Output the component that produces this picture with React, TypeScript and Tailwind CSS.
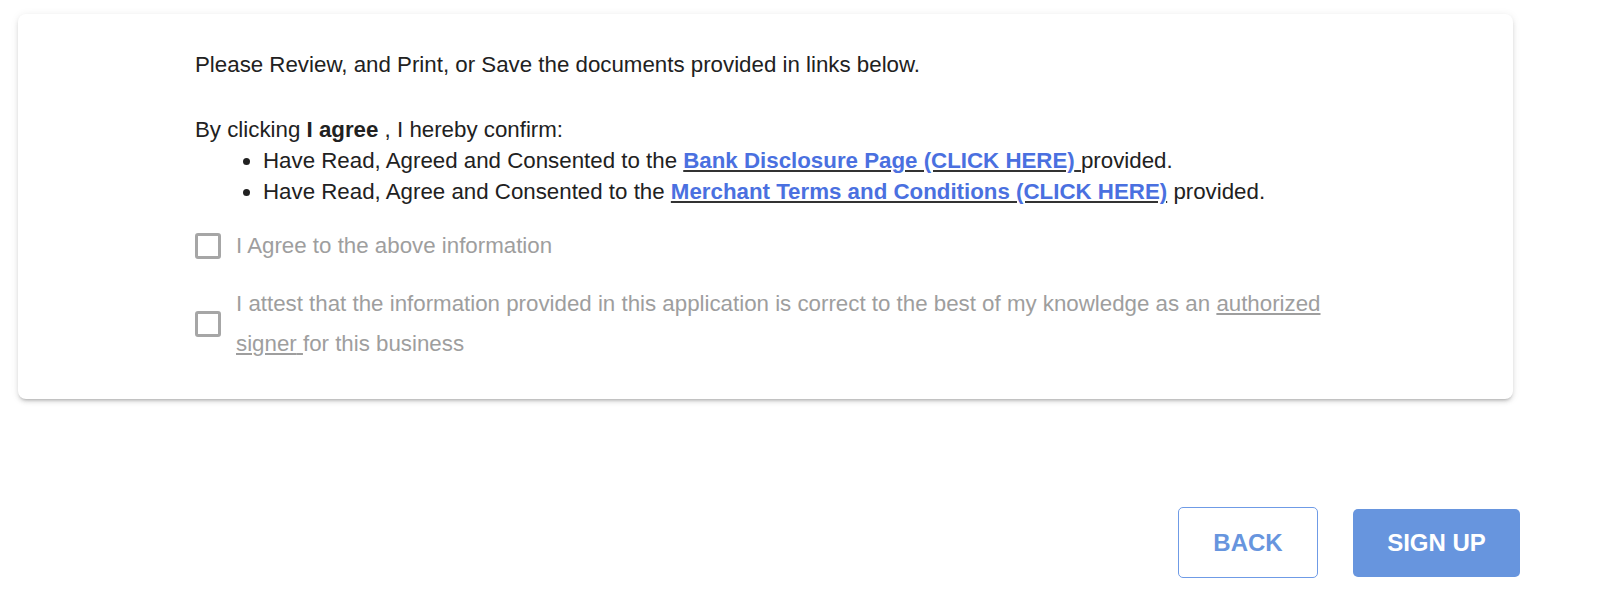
const font = { fontFamily: '"Liberation Sans", Arial, sans-serif' };

function Box() {
  return (
    <span className="block w-[26px] h-[26px] shrink-0 rounded-[3px] border-[3px] border-[#a6a6a6] bg-white" />
  );
}

export default function App() {
  return (
    <div className="min-h-[599px] bg-white pt-[14px] pl-[18px]" style={font}>
      <div className="w-[1495px] rounded-lg bg-white px-[177px] pt-[35px] pb-[35px] shadow-[0_3px_3px_-2px_rgba(0,0,0,0.2),0_3px_4px_0_rgba(0,0,0,0.1),0_1px_8px_0_rgba(0,0,0,0.08)]">
        <p className="text-[22.3px] leading-[31px] text-[#212121]">
          Please Review, and Print, or Save the documents provided in links below.
        </p>
        <p className="mt-[34px] text-[22.3px] leading-[31px] text-[#212121]">
          By clicking <b className="font-bold">I agree</b> , I hereby confirm:
        </p>
        <ul className="list-disc pl-[68px] text-[22.3px] leading-[31px] text-[#212121]">
          <li>
            Have Read, Agreed and Consented to the{" "}
            <a href="#" className="font-bold text-[#4a70e0] underline decoration-[#333] underline-offset-2">
              Bank Disclosure Page (CLICK HERE){" "}
            </a>
            provided.
          </li>
          <li>
            Have Read, Agree and Consented to the{" "}
            <a href="#" className="font-bold text-[#4a70e0] underline decoration-[#333] underline-offset-2">
              Merchant Terms and Conditions (CLICK HERE)
            </a>{" "}
            provided.
          </li>
        </ul>

        <label className="mt-[19px] flex h-[40px] items-center gap-[15px]">
          <Box />
          <span className="text-[22.3px] leading-[40px] text-[#9e9e9e]">I Agree to the above information</span>
        </label>

        <label className="mt-[18px] flex items-center gap-[15px]">
          <Box />
          <span className="text-[22.3px] leading-[40px] text-[#9e9e9e]">
            I attest that the information provided in this application is correct to the best of my knowledge as an{" "}
            <a href="#" className="text-[#9e9e9e] underline underline-offset-2">
              authorized signer{" "}
            </a>
            for this business
          </span>
        </label>
      </div>

      <div className="mt-[108px] flex items-center justify-end gap-[35px] pr-[80px]">
        <button className="h-[71px] w-[140px] rounded-[5px] border border-[#6f9be6] bg-white text-[24px] font-bold text-[#6795de]">
          BACK
        </button>
        <button className="h-[68px] w-[167px] rounded-[5px] bg-[#6795de] text-[24px] font-bold text-white">
          SIGN UP
        </button>
      </div>
    </div>
  );
}
